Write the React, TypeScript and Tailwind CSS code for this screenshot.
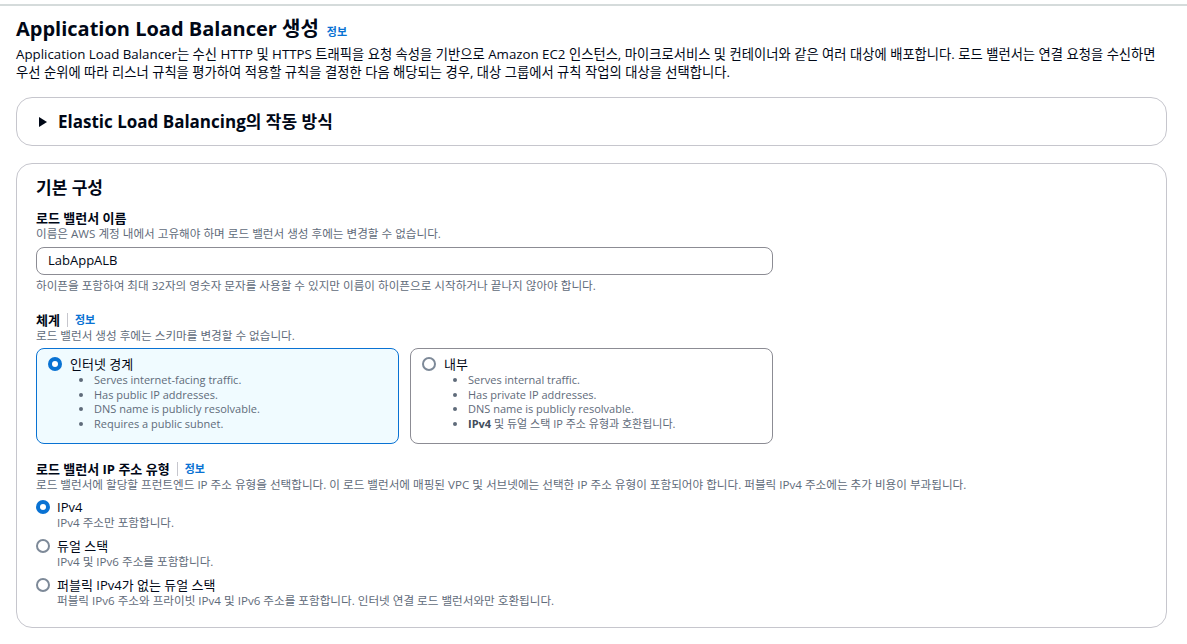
const font = { fontFamily: '"Open Sans", "Noto Sans CJK KR", sans-serif' };

function Info() {
  return <span className="text-[11px] font-bold text-[#0972d3]">정보</span>;
}

function Radio({ checked }: { checked: boolean }) {
  return checked ? (
    <span className="mt-[2px] flex h-[14px] w-[14px] shrink-0 items-center justify-center rounded-full bg-[#0972d3]">
      <span className="h-[6px] w-[6px] rounded-full bg-white" />
    </span>
  ) : (
    <span className="mt-[2px] h-[14px] w-[14px] shrink-0 rounded-full border-2 border-[#7d8998] bg-white" />
  );
}

function SchemeCard({
  checked,
  title,
  items,
}: {
  checked: boolean;
  title: string;
  items: React.ReactNode[];
}) {
  return (
    <div
      className={`flex h-[96px] w-[363px] gap-2 rounded-lg border px-[11px] pt-[6px] ${
        checked ? "border-[#0972d3] bg-[#f0fbff]" : "border-[#8c8c94] bg-white"
      }`}
    >
      <Radio checked={checked} />
      <div>
        <div className="text-[13px] leading-[18px] text-[#000716]">{title}</div>
        <ul className="ml-[24px] list-disc text-[11px] leading-[14.6px] text-[#5f6b7a] marker:text-[#5f6b7a]">
          {items.map((it, i) => (
            <li key={i}>{it}</li>
          ))}
        </ul>
      </div>
    </div>
  );
}

function IpOption({ checked, title, desc }: { checked: boolean; title: string; desc: string }) {
  return (
    <div className="flex gap-[7px]">
      <Radio checked={checked} />
      <div>
        <div className="text-[13px] leading-[18px] text-[#000716]">{title}</div>
        <div className="text-[11.6px] leading-[14px] text-[#5f6b7a]">{desc}</div>
      </div>
    </div>
  );
}

export default function App() {
  return (
    <div className="min-h-[644px] bg-white" style={font}>
      <div className="h-[6px] border-b-2 border-[#d5dbdb]" />
      <div className="w-[1167px] pl-4">
        <h1 className="mt-[10px] flex items-baseline gap-[8px] text-[20px] font-bold leading-[26px] text-[#000716]">
          Application Load Balancer 생성 <Info />
        </h1>
        <p className="text-[13.3px] leading-[18px] text-[#000716]">
          Application Load Balancer는 수신 HTTP 및 HTTPS 트래픽을 요청 속성을 기반으로 Amazon EC2 인스턴스,
          마이크로서비스 및 컨테이너와 같은 여러 대상에 배포합니다. 로드 밸런서는 연결 요청을 수신하면
          <br />
          우선 순위에 따라 리스너 규칙을 평가하여 적용할 규칙을 결정한 다음 해당되는 경우, 대상 그룹에서 규칙 작업의
          대상을 선택합니다.
        </p>

        <div className="mt-[16px] flex h-[49px] items-center gap-[10px] rounded-[16px] border border-[#c6c6cd] pl-[21px]">
          <svg width="10" height="10" viewBox="0 0 10 10">
            <path d="M1 0 L9 5 L1 10 Z" fill="#000716" />
          </svg>
          <span className="text-[17px] font-bold text-[#000716]">Elastic Load Balancing의 작동 방식</span>
        </div>

        <div className="mt-[17px] h-[465px] rounded-[16px] border border-[#c6c6cd] px-[19px] pt-[10px]">
          <h2 className="text-[17px] font-bold leading-[28px] text-[#000716]">기본 구성</h2>

          <div className="mt-[7px] text-[13px] font-bold leading-[18px] text-[#000716]">로드 밸런서 이름</div>
          <div className="text-[11.6px] leading-[14px] text-[#5f6b7a]">
            이름은 AWS 계정 내에서 고유해야 하며 로드 밸런서 생성 후에는 변경할 수 없습니다.
          </div>
          <div className="mt-[6px] flex h-[28px] w-[737px] items-center rounded-lg border border-[#8c8c94] px-[11px] text-[13px] text-[#000716]">
            LabAppALB
          </div>
          <div className="mt-[4px] text-[11.6px] leading-[14px] text-[#5f6b7a]">
            하이픈을 포함하여 최대 32자의 영숫자 문자를 사용할 수 있지만 이름이 하이픈으로 시작하거나 끝나지 않아야 합니다.
          </div>

          <div className="mt-[18px] flex items-center gap-[7px] text-[13px] font-bold leading-[18px] text-[#000716]">
            체계 <span className="h-[14px] w-px bg-[#c6c6cd]" /> <Info />
          </div>
          <div className="text-[11.6px] leading-[14px] text-[#5f6b7a]">
            로드 밸런서 생성 후에는 스키마를 변경할 수 없습니다.
          </div>
          <div className="mt-[5px] flex gap-[11px]">
            <SchemeCard
              checked
              title="인터넷 경계"
              items={[
                "Serves internet-facing traffic.",
                "Has public IP addresses.",
                "DNS name is publicly resolvable.",
                "Requires a public subnet.",
              ]}
            />
            <SchemeCard
              checked={false}
              title="내부"
              items={[
                "Serves internal traffic.",
                "Has private IP addresses.",
                "DNS name is publicly resolvable.",
                <span>
                  <b className="text-[#414d5c]">IPv4</b> 및 듀얼 스택 IP 주소 유형과 호환됩니다.
                </span>,
              ]}
            />
          </div>

          <div className="mt-[16px] flex items-center gap-[7px] text-[13px] font-bold leading-[18px] text-[#000716]">
            로드 밸런서 IP 주소 유형 <span className="h-[14px] w-px bg-[#c6c6cd]" /> <Info />
          </div>
          <div className="text-[11.6px] leading-[14px] text-[#5f6b7a]">
            로드 밸런서에 할당할 프런트엔드 IP 주소 유형을 선택합니다. 이 로드 밸런서에 매핑된 VPC 및 서브넷에는 선택한 IP
            주소 유형이 포함되어야 합니다. 퍼블릭 IPv4 주소에는 추가 비용이 부과됩니다.
          </div>
          <div className="mt-[6px] flex flex-col gap-[7px]">
            <IpOption checked title="IPv4" desc="IPv4 주소만 포함합니다." />
            <IpOption checked={false} title="듀얼 스택" desc="IPv4 및 IPv6 주소를 포함합니다." />
            <IpOption
              checked={false}
              title="퍼블릭 IPv4가 없는 듀얼 스택"
              desc="퍼블릭 IPv6 주소와 프라이빗 IPv4 및 IPv6 주소를 포함합니다. 인터넷 연결 로드 밸런서와만 호환됩니다."
            />
          </div>
        </div>
      </div>
    </div>
  );
}
